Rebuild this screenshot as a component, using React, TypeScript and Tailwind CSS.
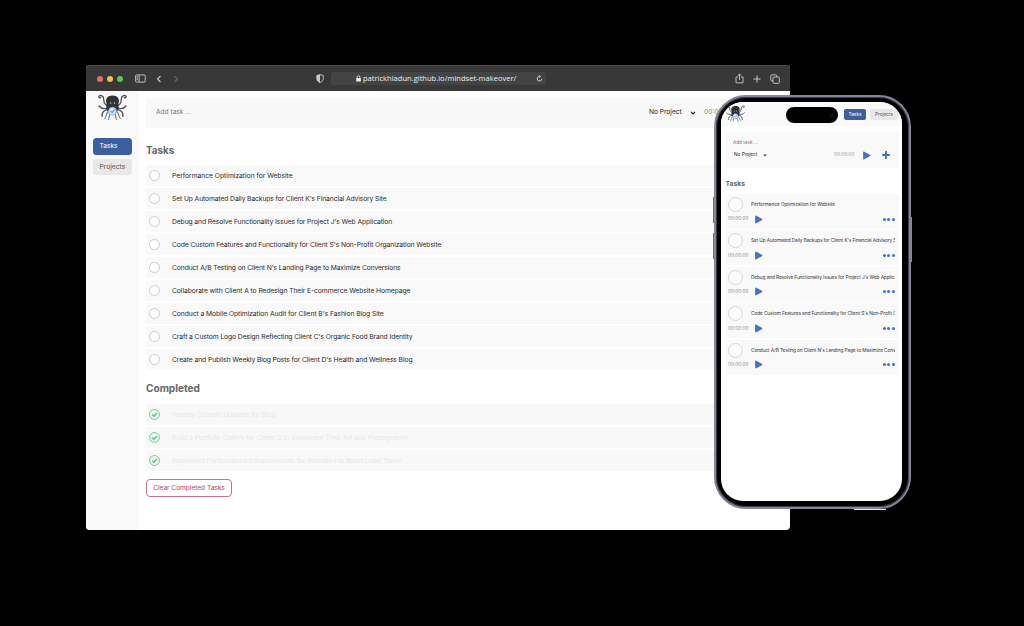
import React from "react";

const tasks = [
  { name: "Performance Optimization for Website", wide: "tracking-[-0.03px]", small: "tracking-[-0.045px]" },
  { name: "Set Up Automated Daily Backups for Client K's Financial Advisory Site", wide: "tracking-[-0.115px]", small: "tracking-[-0.09px]" },
  { name: "Debug and Resolve Functionality Issues for Project J's Web Application", wide: "tracking-[-0.1px]", small: "tracking-[-0.085px]" },
  { name: "Code Custom Features and Functionality for Client S's Non-Profit Organization Website", wide: "tracking-[-0.097px]", small: "tracking-[-0.08px]" },
  { name: "Conduct A/B Testing on Client N's Landing Page to Maximize Conversions", wide: "tracking-[-0.108px]", small: "tracking-[-0.085px]" },
  { name: "Collaborate with Client A to Redesign Their E-commerce Website Homepage", wide: "tracking-[-0.078px]", small: "" },
  { name: "Conduct a Mobile Optimization Audit for Client B's Fashion Blog Site", wide: "tracking-[-0.07px]", small: "" },
  { name: "Craft a Custom Logo Design Reflecting Client C's Organic Food Brand Identity", wide: "tracking-[-0.095px]", small: "" },
  { name: "Create and Publish Weekly Blog Posts for Client D's Health and Wellness Blog", wide: "tracking-[-0.092px]", small: "" },
];

const completed = [
  "Weekly Content Updates for Blog",
  "Build a Portfolio Gallery for Client Q to Showcase Their Art and Photography",
  "Implement Performance Enhancements for Website I to Boost Load Times",
];

function Octopus({ className }: { className: string }) {
  return (
    <svg viewBox="0 0 56 52" className={className} fill="none">
      <g stroke="#505256" strokeWidth="2.6" strokeLinecap="round">
        <path d="M21 24C13 23 11 17 11 11C11 5 5 2 2 5C1 7 3 9 5 8" />
        <path d="M35 24C43 23 45 17 45 11C45 5 51 2 54 5C55 7 53 9 51 8" />
        <path d="M20 27C12 31 6 29 2 24M36 27C44 31 50 29 54 24" />
        <path d="M20 30C11 32 7 37 8 44M36 30C45 32 49 37 48 44" />
      </g>
      <g stroke="#777b80" strokeWidth="2.2" strokeLinecap="round">
        <path d="M21 34C14 37 18 43 13 48M35 34C42 37 38 43 43 48" />
        <path d="M24 38C20 43 23 48 20 50M32 38C36 43 33 48 36 50" />
      </g>
      <path d="M28 4C18 4 14 11 16 17C18 22 14 28 18 33C23 37 33 37 38 33C42 28 38 22 40 17C42 11 38 4 28 4Z" fill="#303236" />
      <ellipse cx="24.5" cy="18.5" rx="1.3" ry="1.6" fill="#ccc" />
      <ellipse cx="31.5" cy="18.5" rx="1.3" ry="1.6" fill="#ccc" />
      <circle cx="28" cy="34" r="7.5" fill="#d9e8fc" stroke="#7da7df" strokeWidth="1.8" />
      <path d="M24.5 34L27.5 36.5L32 31" stroke="#5487cb" strokeWidth="2" />
    </svg>
  );
}

function Play({ className }: { className: string }) {
  return (
    <svg viewBox="0 0 8 9" className={className}>
      <path d="M.7.9L7.2 4.5L.7 8.1Z" fill="#4472c4" stroke="#4472c4" strokeWidth="1" strokeLinejoin="round" />
    </svg>
  );
}

function Chevron({ className }: { className: string }) {
  return (
    <svg viewBox="0 0 6 4" className={className} fill="none">
      <path d="M1 .8L3 2.9L5 .8" stroke="#222" strokeWidth="1.1" />
    </svg>
  );
}

function TitleBar() {
  return (
    <header className="flex h-[26px] shrink-0 items-center border-t border-[#4a4a4a] bg-[#383838] text-[#c9c9c9]">
      <div className="ml-[10.5px] flex gap-[4px]">
        <i className="size-[6px] rounded-full bg-[#ed6a5e]" />
        <i className="size-[6px] rounded-full bg-[#f5bf4f]" />
        <i className="size-[6px] rounded-full bg-[#61c554]" />
      </div>
      <svg viewBox="0 0 11 9" className="ml-[12px] h-[9px] w-[11px]" fill="none" stroke="currentColor" strokeWidth=".9">
        <rect x=".6" y=".9" width="9.6" height="7.2" rx="1" />
        <path d="M4.1 1V8M1.6 2.7H3M1.6 4.2H3M1.6 5.7H3" />
      </svg>
      <svg viewBox="0 0 6 8" className="ml-[10.5px] h-[8px] w-[6px]" fill="none" stroke="currentColor" strokeWidth="1.1">
        <path d="M4.5 1L1.5 4L4.5 7" />
      </svg>
      <svg viewBox="0 0 6 8" className="ml-[11px] h-[8px] w-[6px]" fill="none" stroke="#666" strokeWidth="1.1">
        <path d="M1.5 1L4.5 4L1.5 7" />
      </svg>
      <svg viewBox="0 0 8 9" className="ml-[137px] h-[9px] w-[8px]">
        <path d="M4 .6L7.2 1.5V4.6C7.2 6.7 5.8 7.8 4 8.5C2.2 7.8.8 6.7.8 4.6V1.5Z" fill="none" stroke="currentColor" strokeWidth=".9" />
        <path d="M4 .8V8.4C2.3 7.8.8 6.8.8 4.6V1.6Z" fill="currentColor" />
      </svg>
      <div className="ml-[7px] flex h-[13px] w-[215px] items-center rounded-[3px] bg-[#444] pl-[25px] font-[Open_Sans] text-[7.55px] text-[#eee]">
        <svg viewBox="0 0 5 7" className="h-[7px] w-[5px]">
          <rect x=".2" y="3" width="4.6" height="3.5" rx=".5" fill="currentColor" />
          <path d="M1.1 3V2C1.1.3 3.9.3 3.9 2V3" fill="none" stroke="currentColor" strokeWidth=".8" />
        </svg>
        <span className="ml-[2px] w-[153px] whitespace-nowrap">patrickhladun.github.io/mindset-makeover/</span>
        <svg viewBox="0 0 8 8" className="ml-[20px] h-[7px] w-[7px] shrink-0" fill="none" stroke="currentColor" strokeWidth=".9">
          <path d="M4 1.7A2.6 2.6 0 1 0 6.6 4.4M3.5.3L5.1 1.7L3.5 3.2" />
        </svg>
      </div>
      <svg viewBox="0 0 9 11" className="ml-[189px] h-[11px] w-[9px]" fill="none" stroke="currentColor" strokeWidth=".9">
        <path d="M3 4H1V9.8H8V4H6M4.5 7V1M2.8 2.7L4.5 1L6.2 2.7" />
      </svg>
      <svg viewBox="0 0 8 8" className="ml-[9px] h-[8px] w-[8px]" fill="none" stroke="currentColor" strokeWidth="1">
        <path d="M4 .5V7.5M.5 4H7.5" />
      </svg>
      <svg viewBox="0 0 10 10" className="ml-[9px] h-[10px] w-[10px]" fill="none" stroke="currentColor" strokeWidth=".9">
        <rect x="3" y="3" width="6.3" height="6.3" rx="1" />
        <path d="M3 6.8H1.7Q.8 6.8.8 5.9V1.7Q.8.8 1.7.8H5.9Q6.8.8 6.8 1.7V3" />
      </svg>
    </header>
  );
}

function Browser() {
  return (
    <section className="ml-[86px] mt-[65px] flex h-[464.5px] w-[703.5px] flex-col overflow-hidden rounded-[4px] bg-white">
      <TitleBar />
      <div className="flex min-h-0 flex-1">
        <aside className="flex w-[53px] flex-col bg-[#f9f9f9] px-[7px] pt-[2px]">
          <Octopus className="ml-[4.5px] h-[28px] w-[29px]" />
          <div className="mt-[17px] flex h-[17px] w-[39px] items-center rounded-[3.5px] bg-[#3c5f9f] pl-[6.5px] pt-px text-[6.6px] text-white">Tasks</div>
          <div className="mt-[4px] flex h-[16px] w-[39px] items-center rounded-[3.5px] bg-[#e8e8e8] pl-[6.5px] pt-px text-[6.7px] text-[#555]">Projects</div>
        </aside>
        <main className="flex min-w-0 flex-1 flex-col pl-[7px] pt-[7px]">
          <div className="flex h-[30px] shrink-0 items-center bg-[#f8f8f8] pl-[10px] text-[6.6px] text-[#777]">
            <span className="w-[493px]">Add task ...</span>
            <span className="w-[40px] whitespace-nowrap text-[#222]">No Project</span>
            <Chevron className="ml-[1px] h-[4px] w-[6px]" />
            <span className="ml-[8px] text-[#888]">00:00:00</span>
          </div>
          <h2 className="mt-[15px] h-[15px] shrink-0 text-[9.8px] font-bold leading-[15px] text-[#666]">Tasks</h2>
          <ul className="mt-[7px] flex flex-col gap-[2px]">
            {tasks.map((task) => (
              <li key={task.name} className="flex h-[21px] items-center bg-[#f9f9f9] pl-[3px]">
                <i className="size-[11px] rounded-full border border-[#ccc] bg-white" />
                <span className={`ml-[12px] whitespace-nowrap pt-[1.5px] text-[6.75px] text-[#2c2c2c] ${task.wide}`}>{task.name}</span>
              </li>
            ))}
          </ul>
          <h2 className="mt-[11px] h-[15px] shrink-0 text-[10.1px] font-bold leading-[15px] text-[#666]">Completed</h2>
          <ul className="mt-[8px] flex flex-col gap-[2px]">
            {completed.map((task) => (
              <li key={task} className="flex h-[21px] items-center bg-[#f8f8f8] pl-[3px]">
                <svg viewBox="0 0 11 11" className="size-[11px]" fill="none" stroke="#61ce92">
                  <circle cx="5.5" cy="5.5" r="4.9" />
                  <path d="M3 5.5L4.8 7.2L8 4" strokeWidth="1.7" />
                </svg>
                <span className="ml-[12px] whitespace-nowrap pt-px text-[6.75px] tracking-[-0.08px] text-[#e8e8e8]">{task}</span>
              </li>
            ))}
          </ul>
          <button className="mt-[8px] h-[18px] w-[86px] rounded-[4px] border border-[#c2758a] pt-px text-[6.6px] tracking-[-0.03px] text-[#b14362]">Clear Completed Tasks</button>
        </main>
      </div>
    </section>
  );
}

function Phone() {
  return (
    <section className="absolute left-[714px] top-[95px] h-[414px] w-[197px] rounded-[32px] border-2 border-[#85849a] bg-black pb-[6px] pl-[5px] pr-[7px] pt-[5px] shadow-[inset_0_0_0_1px_#3d3c47]">
      <div className="flex h-full w-[181px] flex-col overflow-hidden rounded-[22px] bg-white">
        <div className="flex h-[24px] shrink-0 items-start bg-[#f9f9f9] pl-[5px] pt-[2px]">
          <Octopus className="h-[19px] w-[19px]" />
          <div className="ml-[41px] mt-[3px] flex h-[16px] w-[52px] items-center justify-end rounded-full bg-black pr-[4px]">
            <i className="size-[5px] rounded-full bg-[#070b1b]" />
          </div>
          <div className="ml-[6px] mt-[5px] flex h-[11px] w-[22px] items-center justify-center rounded-[2px] bg-[#3c5f9f] pt-px text-[4.8px] text-white">Tasks</div>
          <div className="ml-[4px] mt-[5px] flex h-[11px] w-[28px] items-center justify-center rounded-[2px] bg-[#e8e8e8] pt-px text-[4.7px] text-[#555]">Projects</div>
        </div>
        <div className="ml-[5px] mt-[6px] h-[36px] w-[173px] shrink-0 bg-[#f9f9f9] text-[4.7px]">
          <div className="pl-[7px] pt-[7px] leading-[7px] text-[#777]">Add task ...</div>
          <div className="mt-[3px] flex h-[12px] items-center pl-[8px]">
            <span className="w-[29px] whitespace-nowrap text-[#222]">No Project</span>
            <svg viewBox="0 0 4 3" className="h-[3px] w-[4px]"><path d="M.3.4H3.7L2 2.5Z" fill="#333" /></svg>
            <span className="ml-[67px] w-[21px] text-[#999]">00:00:00</span>
            <Play className="ml-[8px] h-[9px] w-[8px]" />
            <svg viewBox="0 0 8 8" className="ml-[11px] size-[8px]"><path d="M4 .8V7.2M.8 4H7.2" stroke="#4472c4" strokeWidth="1.9" strokeLinecap="round" /></svg>
          </div>
        </div>
        <h2 className="ml-[4.5px] mt-[10px] h-[11px] shrink-0 text-[6.8px] font-bold leading-[11px] text-[#666]">Tasks</h2>
        <div className="ml-[5px] mt-[5px] flex w-[173px] flex-col gap-[1.45px]">
          {tasks.slice(0, 5).map((task) => (
            <article key={task.name} className="h-[35px] bg-[#f9f9f9]">
              <div className="flex h-[20px] items-center pl-[2px] pt-px">
                <i className="size-[15px] shrink-0 rounded-full border border-[#d5d5d5] bg-[#fcfcfc]" />
                <span className={`ml-[8px] w-[144px] overflow-hidden whitespace-nowrap text-[4.75px] text-[#333] ${task.small}`}>{task.name}</span>
              </div>
              <div className="flex h-[10px] items-center pl-[2px]">
                <span className="w-[21px] text-[4.7px] text-[#888]">00:00:00</span>
                <Play className="ml-[6px] h-[9px] w-[8px]" />
                <div className="ml-[120px] flex gap-[1.3px]">
                  <i className="size-[3px] rounded-full bg-[#4472c4]" />
                  <i className="size-[3px] rounded-full bg-[#4472c4]" />
                  <i className="size-[3px] rounded-full bg-[#4472c4]" />
                </div>
              </div>
            </article>
          ))}
        </div>
      </div>
      <i className="absolute -left-[3px] top-[100px] h-[26px] w-[1px] bg-[#70707f]" />
      <i className="absolute -left-[3px] top-[136px] h-[26px] w-[1px] bg-[#70707f]" />
      <i className="absolute -right-[3px] top-[120px] h-[45px] w-[1px] bg-[#85849a]" />
      <i className="absolute -bottom-[3px] right-[23px] h-[1px] w-[32px] bg-[#eee]" />
    </section>
  );
}

export default function App() {
  return (
    <div className="relative flex h-[626px] w-[1024px] items-start overflow-hidden bg-black font-[Inter,sans-serif] font-normal">
      <Browser />
      <Phone />
    </div>
  );
}
